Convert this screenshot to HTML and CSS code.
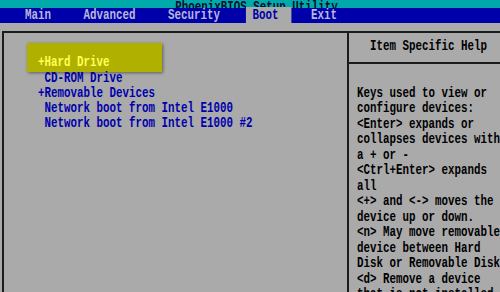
FILE: index.html
```html
<!DOCTYPE html>
<html lang="en">
<head>
  <meta charset="UTF-8">
  <meta name="viewport" content="width=device-width, initial-scale=1.0">
  <title>PhoenixBIOS Setup Utility</title>
  <link rel="stylesheet" href="styles.css">
</head>
<body>
  <div class="title"><span class="sx">PhoenixBIOS Setup Utility</span></div>
  <div class="menu"><span class="sx">Main     Advanced     Security    <span class="on"> Boot  </span>   Exit</span></div>
  <div class="frame">
    <div class="boot">
      <div class="sel"><span class="sx">+Hard Drive</span></div>
      <div class="row"><span class="sx"> CD-ROM Drive</span></div>
      <div class="row"><span class="sx">+Removable Devices</span></div>
      <div class="row"><span class="sx"> Network boot from Intel E1000</span></div>
      <div class="row"><span class="sx"> Network boot from Intel E1000 #2</span></div>
    </div>
    <div class="help">
      <div class="help-head"><span class="sx">Item Specific Help</span></div>
      <div class="help-body"><span class="sx">Keys used to view or
configure devices:
&lt;Enter&gt; expands or
collapses devices with
a + or -
&lt;Ctrl+Enter&gt; expands
all
&lt;+&gt; and &lt;-&gt; moves the
device up or down.
&lt;n&gt; May move removable
device between Hard
Disk or Removable Disk
&lt;d&gt; Remove a device
that is not installed.</span></div>
    </div>
  </div>
</body>
</html>
```

FILE: styles.css
```css
/* BIOS screen: text is a mono font squeezed sideways to get the tall VGA look */
* {
  box-sizing: border-box;
}
body {
  margin: 0;
  height: 292px;
  overflow: hidden;
  background: #aaaaaa;
  font: bold 15px/15.3px "Liberation Mono", "DejaVu Sans Mono", monospace;
  color: #000;
}
.sx {
  display: inline-block;
  white-space: pre;
  transform: scaleX(0.722); /* 9px advance -> 6.5px */
  transform-origin: 0 50%;
}

.title {
  height: 8px;
  overflow: hidden;
  background: #00aaaa;
  color: #0a0a30;
  text-align: center;
  padding-left: 13px;
  > .sx {
    margin-top: -5px;
    transform-origin: 50% 50%;
  }
}

.menu {
  height: 15px;
  background: #0000aa;
  color: #b8b8d8;
  padding-left: 25px;
  line-height: 15px;
  .on {
    background: #aaaaaa;
    color: #0000aa;
  }
}

.frame {
  display: grid;
  grid-template-columns: 343px 1fr;
  height: 300px;
  margin: 8px 0 0 2px;
  border-top: 2px solid #1c1c1c;
  border-left: 2px solid #1c1c1c;
}

.boot {
  padding: 22.3px 0 0 33.5px;
  color: #0000aa;
  .sel {
    width: 135px;
    margin: -12px 0 -1.5px -10.5px;
    padding: 12px 0 1.5px 10.5px;
    background: #b0b000;
    color: #ffff55;
    box-shadow: 1px 1px 3px rgba(0, 0, 0, 0.45);
  }
}

.help {
  border-left: 2px solid #1c1c1c;
}
.help-head {
  height: 31px;
  padding: 6.4px 0 0 21px;
  border-bottom: 2px solid #1c1c1c;
}
.help-body {
  padding: 21.7px 0 0 8px;
  line-height: 15.5px;
}
```
